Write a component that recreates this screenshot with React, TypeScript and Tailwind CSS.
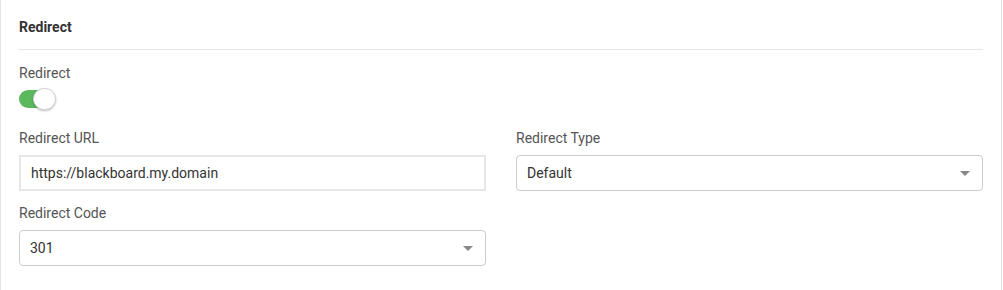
export default function App() {
  return (
    <div className="w-[1003px] h-[290px] bg-white" style={{ fontFamily: 'Roboto, "Liberation Sans", sans-serif' }}>
      <div className="h-full mr-[1px] border-x border-[#e3e3e3] px-[18px]">
        <div className="pt-[18px] pb-[13px] border-b border-[#e6e6e6]">
          <h3 className="text-[14px] leading-[18px] font-bold text-[#333]">Redirect</h3>
        </div>

        <div className="pt-[14px]">
          <label className="block text-[14px] leading-[18px] text-[#555]">Redirect</label>
          <div className="mt-[6px] relative w-[37px] h-[22px]">
            <div className="absolute left-0 top-[2px] w-[34px] h-[18px] rounded-full bg-[#5cb85c]" />
            <div className="absolute right-0 top-0 w-[23px] h-[22px] rounded-full bg-white border border-[#d5d5d5] shadow-[0_1px_2px_rgba(0,0,0,0.25)]" />
          </div>
        </div>

        <div className="grid grid-cols-2 gap-x-[30px] mt-[19px]">
          <div>
            <label className="block text-[14px] leading-[18px] text-[#555]">Redirect URL</label>
            <div className="mt-[8px] h-[36px] border-2 border-[#e6e6e6] flex items-center px-[10px] text-[14px] text-[#333]">
              https://blackboard.my.domain
            </div>
          </div>
          <div>
            <label className="block text-[14px] leading-[18px] text-[#555]">Redirect Type</label>
            <Select value="Default" />
          </div>
          <div className="mt-[13px]">
            <label className="block text-[14px] leading-[18px] text-[#555]">Redirect Code</label>
            <Select value="301" />
          </div>
        </div>
      </div>
    </div>
  )
}

function Select({ value }: { value: string }) {
  return (
    <div className="mt-[8px] h-[36px] border border-[#cccccc] rounded-[4px] flex items-center justify-between pl-[10px] pr-[12px] text-[14px] text-[#333]">
      <span>{value}</span>
      <span className="w-0 h-0 border-l-[5px] border-r-[5px] border-t-[5px] border-l-transparent border-r-transparent border-t-[#888]" />
    </div>
  )
}
